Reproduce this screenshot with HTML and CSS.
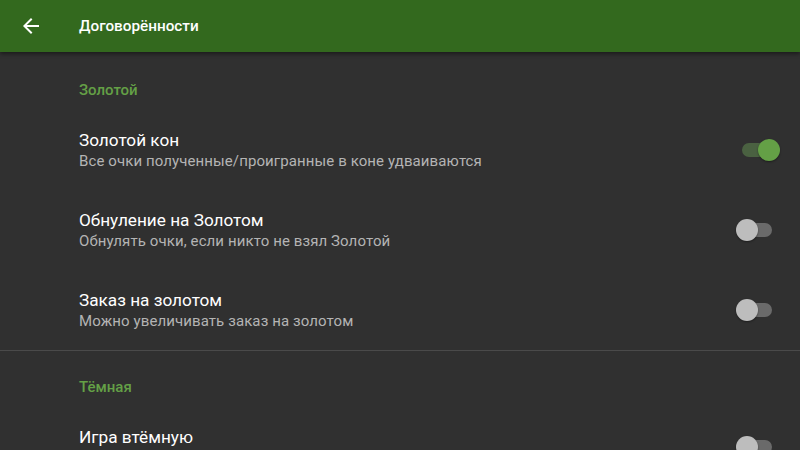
FILE: index.html
```html
<!DOCTYPE html>
<html lang="ru">
<head>
    <meta charset="UTF-8">
    <meta name="viewport" content="width=device-width, initial-scale=1.0">
    <title>Договорённости</title>
    <link rel="stylesheet" href="styles.css">
</head>
<body>

    <header class="toolbar">
        <button class="back" type="button" aria-label="Назад">
            <svg width="24" height="24" viewBox="0 0 24 24">
                <path d="M20 11H7.83l5.59-5.59L12 4l-8 8 8 8 1.41-1.41L7.83 13H20v-2z" fill="#fff"/>
            </svg>
        </button>
        <h1>Договорённости</h1>
    </header>

    <main class="prefs">
        <section class="group">
            <h2 class="group-title">Золотой</h2>
            <div class="pref">
                <div class="pref-text">
                    <div class="pref-title">Золотой кон</div>
                    <div class="pref-summary">Все очки полученные/проигранные в коне удваиваются</div>
                </div>
                <span class="switch on"></span>
            </div>
            <div class="pref">
                <div class="pref-text">
                    <div class="pref-title">Обнуление на Золотом</div>
                    <div class="pref-summary">Обнулять очки, если никто не взял Золотой</div>
                </div>
                <span class="switch"></span>
            </div>
            <div class="pref">
                <div class="pref-text">
                    <div class="pref-title">Заказ на золотом</div>
                    <div class="pref-summary">Можно увеличивать заказ на золотом</div>
                </div>
                <span class="switch"></span>
            </div>
        </section>

        <section class="group">
            <h2 class="group-title">Тёмная</h2>
            <div class="pref">
                <div class="pref-text">
                    <div class="pref-title">Игра втёмную</div>
                    <div class="pref-summary">Можно играть втёмную</div>
                </div>
                <span class="switch"></span>
            </div>
        </section>
    </main>

</body>
</html>
```

FILE: styles.css
```css
body {
    margin: 0;
    background-color: #303030;
    font-family: Roboto, "Noto Sans", sans-serif;
    color: #fff;
    overflow: hidden;
}
.toolbar {
    position: relative;
    z-index: 1;
    display: flex;
    align-items: center;
    height: 52px;
    background-color: #33691e;
    box-shadow: 0 2px 4px rgba(0, 0, 0, 0.45);
}
.back {
    display: flex;
    align-items: center;
    justify-content: center;
    width: 24px;
    height: 24px;
    margin-left: 19px;
    padding: 0;
    border: none;
    background: none;
}
.toolbar h1 {
    margin: 0 0 0 36px;
    font-size: 15.3px;
    font-weight: 500;
    color: #fff;
}
.group + .group {
    border-top: 1px solid #4a4a4a;
}
.group-title {
    margin: 0;
    padding: 28px 0 10px 79px;
    font-size: 15px;
    line-height: 20px;
    font-weight: 500;
    color: #64a046;
}
.group + .group .group-title {
    padding-top: 26px;
}
.pref {
    display: flex;
    align-items: center;
    height: 80px;
    padding: 0 27px 0 79px;
}
.pref-text {
    flex: 1;
}
.pref-title {
    font-size: 17.2px;
    line-height: 22px;
    color: #fff;
}
.pref-summary {
    font-size: 15px;
    line-height: 20px;
    letter-spacing: 0.1px;
    color: #b4b4b4;
}
.switch {
    position: relative;
    width: 30px;
    height: 14px;
    margin-right: 1px;
    border-radius: 7px;
    background-color: #6a6a6a;
}
.switch::after {
    content: "";
    position: absolute;
    top: -4px;
    left: -6px;
    width: 22px;
    height: 22px;
    border-radius: 50%;
    background-color: #bdbdbd;
    box-shadow: 0 1px 2px rgba(0, 0, 0, 0.4);
}
.switch.on {
    background-color: #4a6141;
}
.switch.on::after {
    left: 16px;
    background-color: #64a046;
}
```
